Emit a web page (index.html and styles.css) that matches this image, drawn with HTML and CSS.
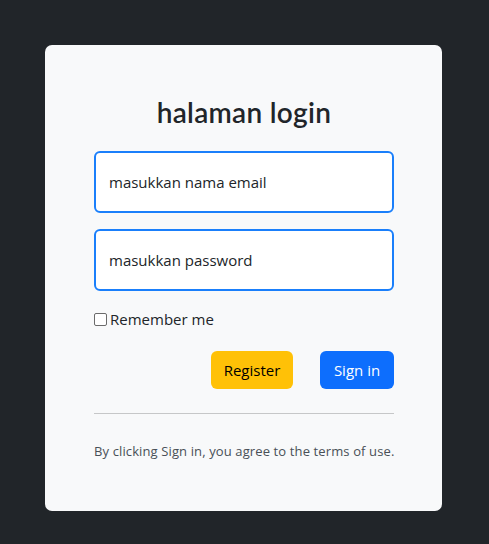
FILE: index.html
```html
<!DOCTYPE html>
<html>
<head>
<meta charset="utf-8">
<link rel="stylesheet" href="styles.css">
</head>
<body>
<div class="card">
  <h1 class="title">halaman login</h1>
  <div class="field">masukkan nama email</div>
  <div class="field second">masukkan password</div>
  <label class="remember"><span class="box"></span>Remember me</label>
  <div class="actions">
    <button class="btn btn-warning">Register</button>
    <button class="btn btn-primary">Sign in</button>
  </div>
  <div class="rule"></div>
  <p class="terms">By clicking Sign in, you agree to the terms of use.</p>
</div>
</body>
</html>
```

FILE: styles.css
```css
html, body {
  margin: 0;
  padding: 0;
}
body {
  background: #212529;
  width: 489px;
  height: 544px;
  font-family: "Open Sans", "Noto Sans", sans-serif;
  color: #212529;
  padding-top: 45px;
  box-sizing: border-box;
}
.card {
  margin-left: 45px;
  width: 397px;
  height: 466px;
  box-sizing: border-box;
  background: #f8f9fa;
  border-radius: 7px;
  padding: 49px 48px 0 49px;
  display: flex;
  flex-direction: column;
}
.title {
  margin: 0;
  font-family: "Lato", sans-serif;
  font-weight: 600;
  font-size: 28px;
  line-height: 36px;
  letter-spacing: 0.3px;
  text-align: center;
  color: #212529;
}
.field {
  margin-top: 21px;
  height: 62px;
  box-sizing: border-box;
  border: 2px solid #1a7ffb;
  border-radius: 6px;
  background: #fff;
  padding: 0 13px;
  display: flex;
  align-items: center;
  font-size: 15px;
  color: #212529;
}
.field.second {
  margin-top: 16px;
}
.remember {
  margin-top: 18px;
  display: flex;
  align-items: center;
  font-size: 15px;
  line-height: 20px;
  color: #212529;
}
.box {
  width: 11px;
  height: 11px;
  border: 1px solid #6b6b6b;
  border-radius: 2px;
  background: #fff;
  margin-right: 3px;
  margin-left: 0;
}
.actions {
  margin-top: 22px;
  display: flex;
  justify-content: flex-end;
  gap: 27px;
}
.btn {
  height: 38px;
  border: none;
  border-radius: 6px;
  font-family: "Open Sans", "Noto Sans", sans-serif;
  font-size: 15px;
  padding: 0 10px;
}
.btn-warning {
  background: #ffc107;
  color: #000;
  width: 82px;
}
.btn-primary {
  background: #0d6efd;
  color: #fff;
  width: 74px;
}
.rule {
  margin-top: 24px;
  height: 1px;
  background: #c6c7c8;
}
.terms {
  margin: 27px 0 0;
  font-size: 13px;
  line-height: 20px;
  letter-spacing: 0.12px;
  color: #495057;
  text-align: center;
  white-space: nowrap;
}
```
